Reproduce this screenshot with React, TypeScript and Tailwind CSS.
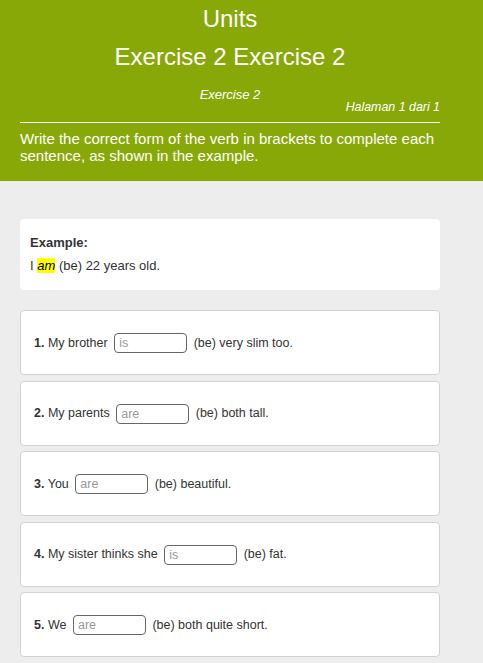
import React from "react";

const items = [
  { n: "1.", pre: "My brother", ph: "is", post: "(be) very slim too." },
  { n: "2.", pre: "My parents", ph: "are", post: "(be) both tall." },
  { n: "3.", pre: "You", ph: "are", post: "(be) beautiful." },
  { n: "4.", pre: "My sister thinks she", ph: "is", post: "(be) fat." },
  { n: "5.", pre: "We", ph: "are", post: "(be) both quite short." },
];

export default function App() {
  return (
    <div
      className="min-h-[663px] bg-[#ededed] text-[#333]"
      style={{ fontFamily: '"Liberation Sans", Arial, sans-serif' }}
    >
      <div className="bg-[#88a808] text-white">
        <div className="ml-[20px] w-[420px] pt-[5px] pb-[17px]">
          <h1 className="text-center text-[24px] leading-[28px]">Units</h1>
          <h2 className="mt-[10px] text-center text-[24px] leading-[28px]">
            Exercise 2 Exercise 2
          </h2>
          <div className="mt-[16px] text-center text-[13px] italic leading-[15px]">
            Exercise 2
          </div>
          <div className="-mt-[2px] text-right text-[12.4px] italic leading-[14px]">
            Halaman 1 dari 1
          </div>
          <div className="mt-[8px] h-px bg-white" />
          <p className="mt-[7px] text-[15px] leading-[17px]">
            Write the correct form of the verb in brackets to complete each
            sentence, as shown in the example.
          </p>
        </div>
      </div>

      <div className="ml-[20px] w-[420px] pt-[38px] pb-[6px]">
        <div className="rounded-[4px] bg-white px-[10px] pt-[16px] pb-[17px] text-[13px] leading-[15px]">
          <div className="font-bold">Example:</div>
          <div className="mt-[8px]">
            I <span className="bg-[#ffff00] italic text-black">am</span> (be) 22
            years old.
          </div>
        </div>

        <div className="mt-[20px] flex flex-col gap-[5.5px]">
          {items.map((it) => (
            <div
              key={it.n}
              className="flex h-[65px] items-center rounded-[4px] border border-[#d2d2d2] bg-white px-[13px]"
            >
              <div className="pt-px text-[12.5px] leading-[20px]">
                <b>{it.n}</b> {it.pre}{" "}
                <input
                  placeholder={it.ph}
                  className="mx-[3px] inline-block h-[20px] w-[73px] rounded-[4px] border border-[#666] bg-white px-[4px] align-middle text-[12.5px] outline-none placeholder:text-[#9a9a9a]"
                />{" "}
                {it.post}
              </div>
            </div>
          ))}
        </div>
      </div>
    </div>
  );
}
